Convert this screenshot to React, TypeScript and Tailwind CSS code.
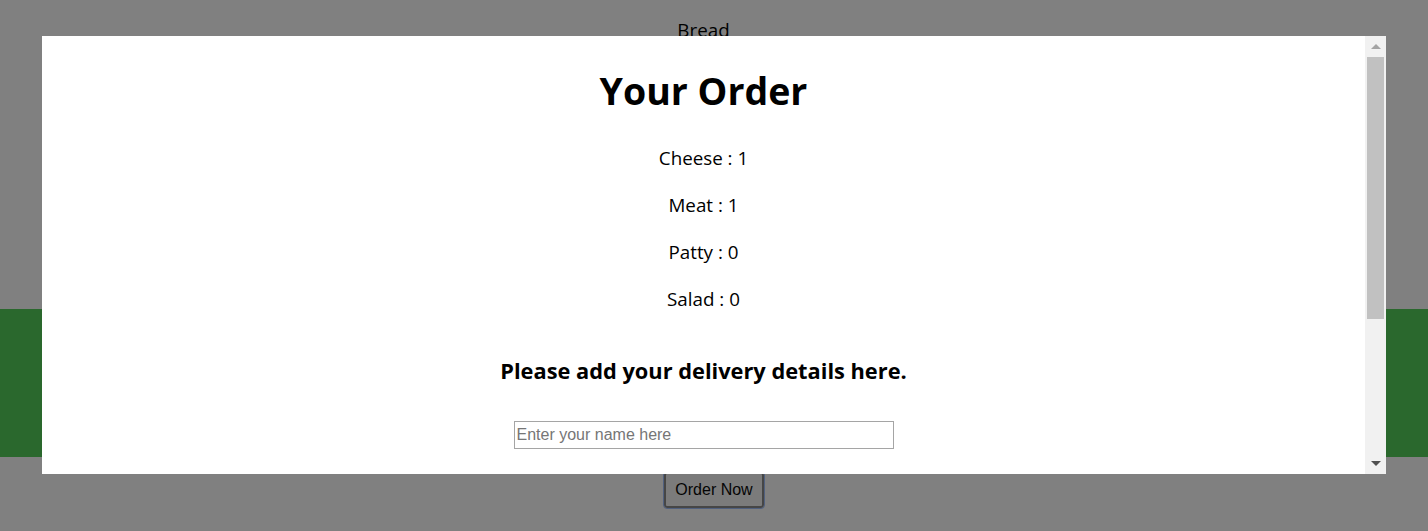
import React from "react";

const items = [
  { name: "Cheese", count: 1 },
  { name: "Meat", count: 1 },
  { name: "Patty", count: 0 },
  { name: "Salad", count: 0 },
];

function Scrollbar() {
  return (
    <div className="flex w-[21px] shrink-0 flex-col bg-[#f1f1f1]">
      <div className="flex h-[21px] items-center justify-center">
        <div className="h-0 w-0 border-x-[5px] border-b-[5px] border-x-transparent border-b-[#a3a3a3]" />
      </div>
      <div className="mx-[2px] h-[262px] bg-[#c1c1c1]" />
      <div className="flex-1" />
      <div className="flex h-[21px] items-center justify-center">
        <div className="h-0 w-0 border-x-[5px] border-t-[5px] border-x-transparent border-t-[#505050]" />
      </div>
    </div>
  );
}

export default function App() {
  return (
    <div className="relative h-[531px] w-full overflow-hidden bg-[#808080] font-['Open_Sans',sans-serif] text-[18.8px] text-black">
      <div className="flex flex-col items-center">
        <p className="mt-[17px] pr-[21px] leading-[27px]">Bread</p>
        <div className="mt-[265px] h-[148px] w-full bg-[#2a682d]" />
        <button className="mt-[15px] rounded-[3px] border-2 border-[#464646] bg-[#7b7b7b] px-[9px] py-[6px] font-['Liberation_Sans',Arial,sans-serif] text-[16px] leading-[20px] text-[#050505] outline outline-1 outline-[#50607f]">
          Order Now
        </button>
      </div>

      <div className="absolute left-[42px] top-[36px] flex h-[438px] w-[1344px] bg-white">
        <div className="flex flex-1 flex-col items-center overflow-hidden text-center">
          <h1 className="mt-[28px] text-[37.5px] font-bold leading-[54px]">Your Order</h1>
          <div className="mt-[27px] flex flex-col gap-[20px]">
            {items.map((item) => (
              <p key={item.name} className="leading-[27px]">
                {item.name} : {item.count}
              </p>
            ))}
          </div>
          <h3 className="mt-[42px] text-[21.8px] font-bold leading-[31px]">
            Please add your delivery details here.
          </h3>
          <input
            type="text"
            placeholder="Enter your name here"
            className="mt-[35px] h-[28px] w-[380px] border border-[#a5a5a5] px-[2px] font-['Liberation_Sans',Arial,sans-serif] text-[16px] text-black placeholder:text-[#767676] outline-none"
          />
        </div>
        <Scrollbar />
      </div>
    </div>
  );
}
